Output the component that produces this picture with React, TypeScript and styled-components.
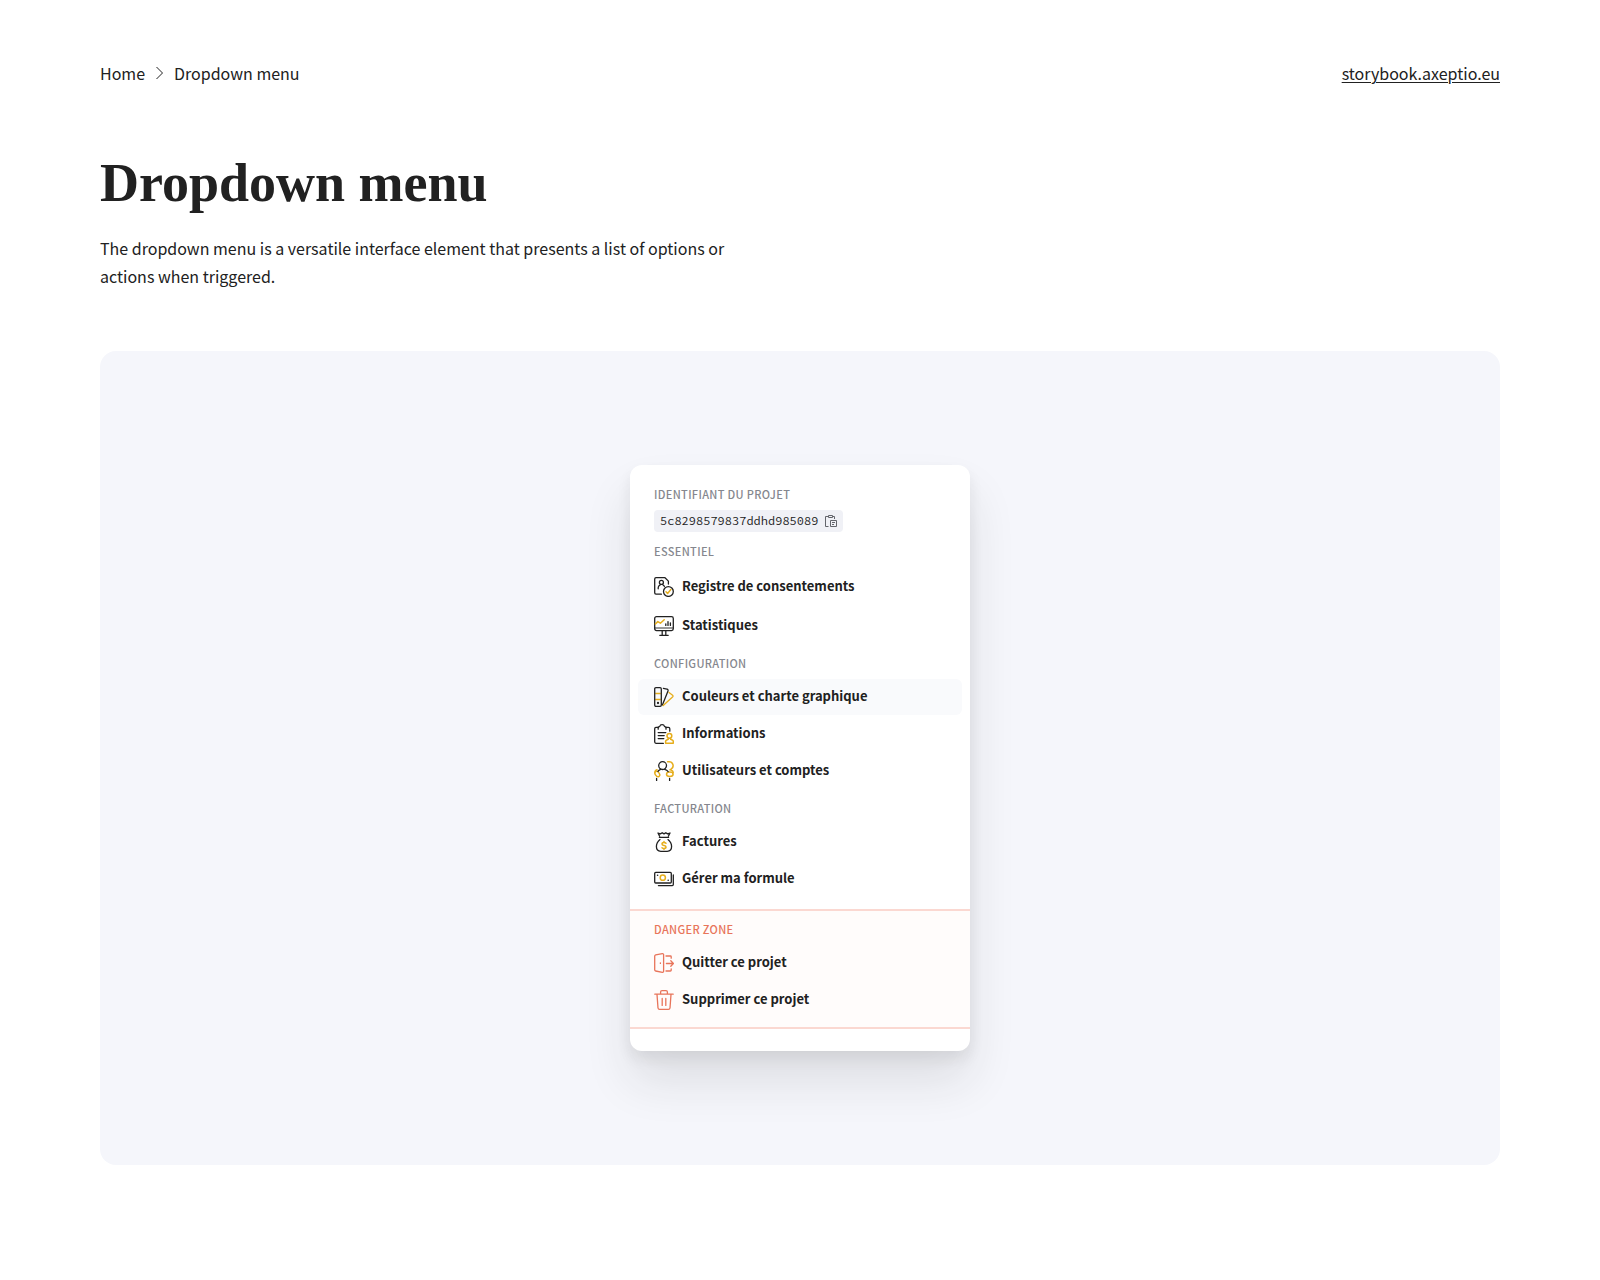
import React from "react";
import styled, { createGlobalStyle, css } from "styled-components";

const ink = "#212121";
const gold = "#e6ae1c";
const coral = "#e8745a";

const GlobalStyle = createGlobalStyle`
  *, *::before, *::after { box-sizing: border-box; }
  body {
    margin: 0;
    background: #ffffff;
    color: ${ink};
    font-family: "Source Sans Pro", "Noto Sans CJK SC", "Noto Sans", sans-serif;
    font-size: 16px;
    line-height: 28px;
  }
`;

const Page = styled.main`
  padding: 59px 100px 116px;
`;

const TopBar = styled.header`
  display: flex;
  justify-content: space-between;
  align-items: center;
  margin-bottom: 60px;
`;

const Breadcrumb = styled.nav`
  display: flex;
  align-items: center;
  gap: 10px;
`;

const Crumb = styled.a`
  color: inherit;
  text-decoration: none;
`;

const SiteLink = styled.a`
  color: inherit;
  text-decoration: underline;
  text-decoration-thickness: 1px;
  text-underline-offset: 2px;
`;

const Title = styled.h1`
  margin: 0 0 15px;
  font-family: "Source Serif Pro", "Liberation Serif", serif;
  font-size: 54px;
  line-height: 72px;
  font-weight: 700;
`;

const Intro = styled.p`
  margin: 0 0 61px;
  max-width: 650px;
`;

const Stage = styled.section`
  display: flex;
  justify-content: center;
  padding: 114px 24px;
  background: #f5f6fb;
  border-radius: 16px;
`;

const Menu = styled.div`
  width: 340px;
  padding: 21px 0 22px;
  background: #ffffff;
  border-radius: 12px;
  box-shadow: 0 30px 48px rgba(33, 33, 33, 0.11), 0 8px 14px rgba(33, 33, 33, 0.08);
`;

const Group = styled.section<{ $danger?: boolean }>`
  padding: 0 8px;
  & + & {
    margin-top: 11px;
  }
  ${({ $danger }) =>
    $danger &&
    css`
      && {
        margin-top: 12px;
      }
      padding: 10px 8px 9px;
      background: #fffcfb;
      border: solid #fbd8d1;
      border-width: 2px 0;
    `}
`;

const Label = styled.h2<{ $danger?: boolean }>`
  margin: 0 0 8px;
  padding: 0 16px;
  font-size: 11px;
  line-height: 16px;
  font-weight: 500;
  letter-spacing: 0.03em;
  text-transform: uppercase;
  color: ${({ $danger }) => ($danger ? coral : "#85878e")};
`;

const ProjectId = styled.button`
  display: flex;
  align-items: center;
  gap: 6px;
  height: 22px;
  margin: 0 16px;
  padding: 0 6px;
  border: 0;
  border-radius: 4px;
  background: #f0f1f6;
  color: ${ink};
  font-family: "Source Code Pro", "Liberation Mono", monospace;
  font-size: 12px;
  line-height: 22px;
  cursor: pointer;
`;

const Items = styled.ul`
  display: grid;
  gap: 1px;
  margin: 0;
  padding: 0;
  list-style: none;
`;

const Item = styled.button<{ $active?: boolean; $roomy?: boolean }>`
  display: flex;
  align-items: center;
  gap: 8px;
  width: 100%;
  height: ${({ $roomy }) => ($roomy ? 38 : 36)}px;
  padding: ${({ $roomy }) => ($roomy ? 2 : 0)}px 16px 0;
  border: 0;
  border-radius: 6px;
  background: ${({ $active }) => ($active ? "#f9fafc" : "transparent")};
  color: ${ink};
  font: inherit;
  font-size: 13px;
  font-weight: 700;
  line-height: 20px;
  text-align: left;
  cursor: pointer;
`;

const ItemText = styled.span`
  padding-bottom: 2px;
`;

const Glyph = styled.svg`
  flex: none;
  width: 20px;
  height: 20px;
  fill: none;
  stroke: ${ink};
  stroke-width: 1.3;
  stroke-linecap: round;
  stroke-linejoin: round;
`;

const icons: Record<string, React.ReactNode> = {
  registry: (
    <>
      <path d="M7.4 17.2H2A1.4 1.4 0 0 1 .7 15.800V2A1.400 1.400 0 0 1 2 .7h9l3.400 3.400v3" />
      <circle cx="7.4" cy="5.4" r="2" />
      <path d="M4.200 11.800v-1c0-1.300.7-2.100 1.800-2.600M8.700 7.600l1.700 1.600" />
      <circle cx="14.4" cy="14.5" r="4.900" />
      <path stroke={gold} strokeWidth="1.500" d="m12 14.800 1.600 1.600 3.200-3.800" />
    </>
  ),
  stats: (
    <>
      <path stroke="#777777" strokeWidth="1.500" strokeLinecap="butt" d="M.7 12h18.600" />
      <rect x=".7" y=".7" width="18.6" height="13.900" rx="1.800" />
      <path d="M8.200 14.800v3.600M11.800 14.800v3.600M5.800 19.300h8.400" />
      <path d="M11.800 9.400V7.800M14 9.400V5.600M16.400 9.400V7" />
      <path stroke={gold} strokeWidth="1.500" d="M1.400 8 3.800 5.600 6.400 7.200 10.200 3.800" />
    </>
  ),
  palette: (
    <>
      <path stroke={gold} strokeWidth="1.500" strokeLinecap="butt" d="M1.2 6.4h5.6M1.2 12.4h5.6" />
      <rect x=".7" y=".7" width="6.6" height="18.6" rx="1.2" />
      <path d="M9.4 1.4 13 2.2q1.4.4 1 1.7L8.4 18" />
      <path stroke={gold} d="M15 5.4l3.600 2.800q.8.700.2 1.500L9.200 18.600" />
      <circle cx="4" cy="16" r=".5" />
    </>
  ),
  info: (
    <>
      <path d="M9.4 19.3H2A1.4 1.4 0 0 1 .7 18V4.800A1.400 1.400 0 0 1 2 3.400h2.200M12 3.400h2.400a1.400 1.400 0 0 1 1.400 1.400v2.400" />
      <path d="M4.2 5.2V3.4q0-.8 1.400-.8C6 1.300 7 .7 8.100.7s2.100.6 2.500 1.900q1.400 0 1.400.8v1.800" />
      <path d="M4.2 8.6h7.6M4.2 11.6h6M4.2 14.6h5.6" />
      <g stroke={gold} strokeWidth="1.500">
        <circle cx="15.4" cy="11.8" r="2.4" />
        <path d="M14.200 14.400v1l-2 .9q-.6.4-.6 1.200v1.700h7.700v-1.700q0-.8-.6-1.200l-2-.9v-1" />
      </g>
    </>
  ),
  users: (
    <>
      <g stroke={gold} strokeWidth="1.500">
        <path d="M13.6.8h1.600a3.900 3.900 0 0 1 2.200 7.100l-1.400.9" />
        <ellipse cx="3.3" cy="13" rx="2" ry="3" transform="rotate(-35 3.3 13)" />
        <ellipse cx="15.8" cy="13.2" rx="3.300" ry="2.200" />
        <path d="M1 11q0-1.600 2-2.200M17.2 9.200q1.800.6 2 2.200" />
      </g>
      <circle cx="8.6" cy="4.6" r="3.900" />
      <path d="M4 10.4q.8-1.2 2.6-2M10.6 8.4q2.4.8 3.600 2.200M2.600 17.400v2.200M15.600 17.400v2.200" />
    </>
  ),
  invoices: (
    <>
      <path d="M5.6 4.2 4 1l2.4.9L8.2.7 10 1.900l1.800-1.200 1.800 1.200L16 1l-1.600 3.200M5.400 5.400h9.200" />
      <path d="M6 7.6C3.6 9.6 2.4 11.8 2.4 14.6c0 3.200 1.800 4.700 4.400 4.700h6.400c2.600 0 4.400-1.500 4.400-4.700 0-2.800-1.200-5-3.600-7" />
      <path stroke={gold} strokeWidth="1.500" d="M12 11.200c-.5-.5-1.100-.7-2-.7-1.200 0-2 .5-2 1.500 0 2.200 4 1 4 3.100 0 1-.9 1.500-2 1.500-.9 0-1.500-.3-2-.8M10 9.600v.9M10 16.700v.9" />
    </>
  ),
  plan: (
    <>
      <rect x=".7" y="3.4" width="16.6" height="10.600" rx="1" />
      <path d="M19.300 6v9.600q0 1-1 1H4.400" />
      <circle cx="8.8" cy="8.700" r="2.600" stroke={gold} strokeWidth="1.500" />
      <path d="M3.600 6.200v.1M14.200 11.200v.1" strokeWidth="1.600" />
    </>
  ),
  leave: (
    <g stroke={coral}>
      <path d="M.7 3.200q0-1 1-1.300L8.400.7q1.200-.1 1.200 1v16.600q0 1.100-1.200 1L1.700 18q-1-.2-1-1.200z" />
      <path d="M12 3h4.400q.8 0 .8.8v1.400M12 18h4.400q.8 0 .8-.8v-1.400M12.400 10.500h7M16.800 7.800l2.600 2.700-2.600 2.700M6.400 9.800v.6" />
    </g>
  ),
  trash: (
    <g stroke={coral}>
      <path d="M.8 4.2h18.400M6.600 4V2.100Q6.600.7 8 .7h4q1.400 0 1.400 1.400V4M3 4.400 4 18q.2 1.300 1.600 1.300h8.800q1.400 0 1.600-1.300l1-13.600M8.200 8.400v7M11.800 8.400v7" />
    </g>
  ),
};

type Entry = { icon: string; text: string; active?: boolean };
type Section = { title: string; danger?: boolean; roomy?: boolean; entries: Entry[] };

const sections: Section[] = [
  {
    title: "Essentiel",
    roomy: true,
    entries: [
      { icon: "registry", text: "Registre de consentements" },
      { icon: "stats", text: "Statistiques" },
    ],
  },
  {
    title: "Configuration",
    entries: [
      { icon: "palette", text: "Couleurs et charte graphique", active: true },
      { icon: "info", text: "Informations" },
      { icon: "users", text: "Utilisateurs et comptes" },
    ],
  },
  {
    title: "Facturation",
    entries: [
      { icon: "invoices", text: "Factures" },
      { icon: "plan", text: "Gérer ma formule" },
    ],
  },
  {
    title: "Danger zone",
    danger: true,
    entries: [
      { icon: "leave", text: "Quitter ce projet" },
      { icon: "trash", text: "Supprimer ce projet" },
    ],
  },
];

export default function App() {
  return (
    <>
      <GlobalStyle />
      <Page>
        <TopBar>
          <Breadcrumb>
            <Crumb href="#home">Home</Crumb>
            <svg width="9" height="14" viewBox="0 0 9 14" fill="none" stroke={ink} strokeWidth="1" aria-hidden="true">
              <path d="M1.500 1l6 6-6 6" />
            </svg>
            <Crumb href="#dropdown" aria-current="page">Dropdown menu</Crumb>
          </Breadcrumb>
          <SiteLink href="#storybook">storybook.axeptio.eu</SiteLink>
        </TopBar>
        <Title>Dropdown menu</Title>
        <Intro>
          The dropdown menu is a versatile interface element that presents a list of options or actions when triggered.
        </Intro>
        <Stage>
          <Menu>
            <Group>
              <Label>Identifiant du projet</Label>
              <ProjectId type="button">
                5c8298579837ddhd985089
                <svg width="13" height="12" viewBox="0 0 13 12" fill="none" stroke="#63656b" strokeWidth="1" aria-hidden="true">
                  <path d="M4.500 11.500h-3v-10H4M9 1.500h1.500V4M4.500.5h4v2h-4zM6.500 5.500h6v6h-6zM8 7.500h3M8 9.500h2" />
                </svg>
              </ProjectId>
            </Group>
            {sections.map((section) => (
              <Group key={section.title} $danger={section.danger}>
                <Label $danger={section.danger}>{section.title}</Label>
                <Items>
                  {section.entries.map((entry) => (
                    <li key={entry.text}>
                      <Item type="button" $active={entry.active} $roomy={section.roomy}>
                        <Glyph viewBox="0 0 20 20" aria-hidden="true">{icons[entry.icon]}</Glyph>
                        <ItemText>{entry.text}</ItemText>
                      </Item>
                    </li>
                  ))}
                </Items>
              </Group>
            ))}
          </Menu>
        </Stage>
      </Page>
    </>
  );
}
